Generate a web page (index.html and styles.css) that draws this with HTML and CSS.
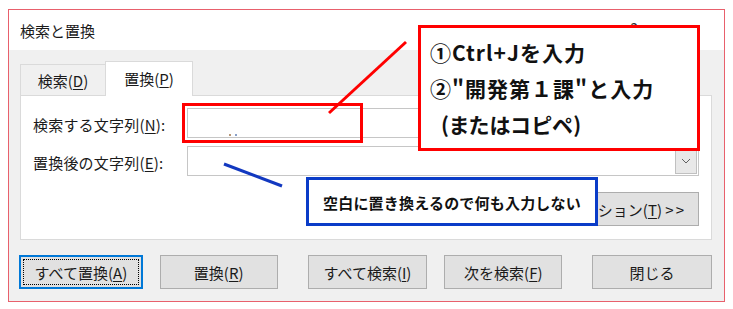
FILE: index.html
```html
<!DOCTYPE html>
<html lang="ja">
<head>
<meta charset="utf-8">
<title>検索と置換</title>
<link rel="stylesheet" href="styles.css">
</head>
<body>
<div class="stage">
  <div class="dialog">
    <div class="titlebar">
      <span class="title">検索と置換</span>
      <span class="tb-btns"><span class="tb-help">?</span><span class="tb-close">×</span></span>
    </div>
    <div class="body">
      <div class="tabs">
        <div class="tab">検索(<u>D</u>)</div>
        <div class="tab active">置換(<u>P</u>)</div>
      </div>
      <div class="panel">
        <div class="row">
          <span class="lbl">検索する文字列(<u>N</u>):</span>
          <div class="combo"><span class="ime-dots"><i class="d1"></i><i class="d2"></i></span><span class="dd"><svg width="10" height="6" viewBox="0 0 10 6"><polyline points="1,1 5,5 9,1" fill="none" stroke="#606060" stroke-width="1"/></svg></span></div>
        </div>
        <div class="row">
          <span class="lbl">置換後の文字列(<u>E</u>):</span>
          <div class="combo"><span class="dd"><svg width="10" height="6" viewBox="0 0 10 6"><polyline points="1,1 5,5 9,1" fill="none" stroke="#606060" stroke-width="1"/></svg></span></div>
        </div>
        <div class="opt-row">
          <button class="btn opt">オプション(<u>T</u>) <span class="gt">&gt;&gt;</span></button>
        </div>
      </div>
      <div class="buttons">
        <button class="btn focus w124 first"><span class="focus-rect">すべて置換(<u>A</u>)</span></button>
        <button class="btn w118 gs">置換(<u>R</u>)</button>
        <button class="btn w120 gl">すべて検索(<u>I</u>)</button>
        <button class="btn w118 gs">次を検索(<u>F</u>)</button>
        <button class="btn w120 gl">閉じる</button>
      </div>
    </div>
  </div>

  <div class="mark-input"></div>
  <svg class="annot-lines" width="733" height="309" viewBox="0 0 733 309">
    <line x1="329" y1="113" x2="406" y2="42" stroke="#ff0000" stroke-width="3"/>
    <line x1="224" y1="164" x2="282" y2="186" stroke="#1238c0" stroke-width="3"/>
  </svg>
  <div class="callout-red">
    <div class="cl">①Ctrl+Jを入力</div>
    <div class="cl">②"開発第１課"と入力</div>
    <div class="cl c3">(またはコピペ)</div>
  </div>
  <div class="callout-blue">空白に置き換えるので何も入力しない</div>
</div>
</body>
</html>
```

FILE: styles.css
```css
* { box-sizing: border-box; }
html, body { margin: 0; padding: 0; background: #fff; }
body {
  width: 733px;
  height: 309px;
  overflow: hidden;
  font-family: "Noto Sans CJK JP", "Noto Sans", sans-serif;
  color: #000;
}
u { text-decoration: underline; text-underline-offset: 2px; text-decoration-thickness: 1px; }

.stage {
  position: relative;
  width: 733px;
  height: 309px;
  padding: 9px 0 0 8px;
}

.dialog {
  width: 717px;
  height: 293px;
  border: 1px solid #e8606c;
  background: #f0f0f0;
  display: flex;
  flex-direction: column;
}

.titlebar {
  height: 40px;
  background: #fff;
  display: flex;
  align-items: center;
  padding-left: 11px;
  font-size: 15px;
  color: #1a1a1a;
}
.tb-btns { margin-left: auto; display: flex; margin-top: -4px; }
.tb-help, .tb-close { width: 60px; text-align: center; font-size: 15px; color: #333; }

.body {
  flex: 1;
  padding: 11px 12px 12px 11px;
  display: flex;
  flex-direction: column;
}

.tabs {
  height: 34px;
  display: flex;
  align-items: flex-end;
}
.tab {
  width: 85px;
  height: 31px;
  border: 1px solid #dadada;
  border-bottom: none;
  border-right: none;
  display: flex;
  align-items: center;
  justify-content: center;
  font-size: 15px;
  color: #1a1a1a;
  background: #f0f0f0;
}
.tab.active {
  width: 88px;
  height: 35px;
  border-right: 1px solid #dadada;
  background: #fff;
  margin-bottom: -1px;
  position: relative;
  z-index: 1;
  padding-bottom: 2px;
}

.panel {
  height: 145px;
  border: 1px solid #dadada;
  background: #fff;
  padding: 12px 12px 0 12px;
  display: flex;
  flex-direction: column;
}

.row {
  display: flex;
  align-items: center;
  height: 30px;
}
.row + .row { margin-top: 8px; }

.lbl {
  width: 154px;
  font-size: 15px;
  letter-spacing: 0.2px;
  color: #1a1a1a;
  padding-top: 2px;
}

.combo {
  flex: 1;
  height: 30px;
  border: 1px solid #c6c6c6;
  background: #fff;
  display: flex;
  align-items: center;
  justify-content: flex-end;
  padding-right: 1px;
  position: relative;
}
.dd {
  width: 22px;
  height: 26px;
  background: #e8e8e8;
  border: 1px solid #c0c0c0;
  display: flex;
  align-items: center;
  justify-content: center;
}
.ime-dots {
  position: absolute;
  left: 41px;
  bottom: 1px;
  display: flex;
  gap: 4px;
}
.ime-dots i { display: block; width: 2px; height: 2px; }
.ime-dots .d1 { background: #b89878; }
.ime-dots .d2 { background: #8aa0c8; }

.opt-row {
  margin-top: 16px;
  display: flex;
  justify-content: flex-end;
}

.btn {
  height: 34px;
  background: #e1e1e1;
  border: 1px solid #adadad;
  font-family: "Noto Sans CJK JP", "Noto Sans", sans-serif;
  font-size: 15px;
  color: #1a1a1a;
  padding: 0;
  display: flex;
  align-items: center;
  justify-content: center;
  white-space: pre;
}
.btn.opt {
  width: 125px;
  justify-content: flex-end;
  padding-right: 12px;
}
.gt { letter-spacing: 2px; }

.buttons {
  margin-top: 15px;
  display: flex;
}
.w124 { width: 124px; }
.w118 { width: 118px; }
.w120 { width: 120px; }
.first { margin-left: -1px; }
.gs { margin-left: 17px; }
.gl { margin-left: 30px; }
.btn.focus {
  border: 2px solid #0078d7;
  padding: 2px;
}
.focus-rect {
  flex: 1;
  align-self: stretch;
  border: 1px dotted #000;
  display: flex;
  align-items: center;
  justify-content: center;
}

/* annotations */
.mark-input {
  position: absolute;
  left: 182px;
  top: 103px;
  width: 181px;
  height: 40px;
  border: 3px solid #ff0000;
}
.annot-lines {
  position: absolute;
  left: 0;
  top: 0;
  pointer-events: none;
}
.callout-red {
  position: absolute;
  left: 418px;
  top: 25px;
  width: 282px;
  height: 126px;
  border: 3px solid #ff0000;
  background: #fff;
  padding: 6px 0 0 9px;
}
.cl {
  height: 36px;
  line-height: 36px;
  font-size: 21px;
  font-weight: 700;
  letter-spacing: 1px;
  color: #111;
  white-space: nowrap;
}
.c3 {
  padding-left: 11px;
  letter-spacing: 0.5px;
  font-feature-settings: "palt";
}
.callout-blue {
  position: absolute;
  left: 306px;
  top: 177px;
  width: 292px;
  height: 49px;
  border: 3px solid #0a3cc8;
  background: #fff;
  display: flex;
  align-items: center;
  justify-content: center;
  font-size: 15px;
  font-weight: 700;
  letter-spacing: 0.2px;
  color: #111;
  padding-top: 2px;
}
```
